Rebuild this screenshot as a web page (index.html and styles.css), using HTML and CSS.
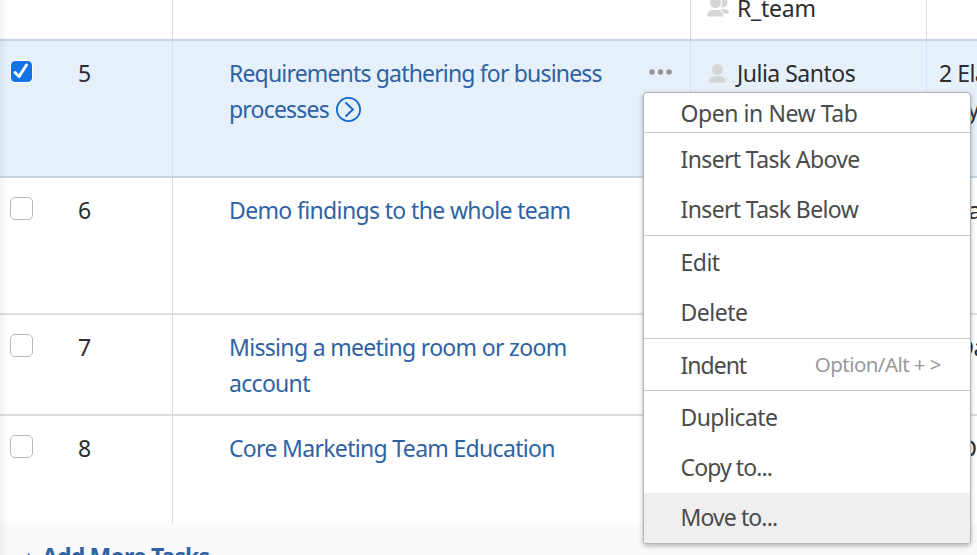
FILE: index.html
```
<!DOCTYPE html>
<html lang="en">
<head>
<meta charset="utf-8">
<title>Tasks</title>
<link rel="stylesheet" href="styles.css">
</head>
<body>
<main class="tasks">
  <div class="row row-partial">
    <div class="cell cell-num"></div>
    <div class="cell cell-name"></div>
    <div class="cell cell-owner">
      <svg class="person team" width="24" height="20" viewBox="0 0 24 20"><circle cx="16.5" cy="5.5" r="5"/><path d="M12 16.500C13 12.500 16 12 18 12Q23.300 12.500 23 16.500Z"/><circle class="halo" cx="9.500" cy="5.500" r="6.800"/><path class="halo" d="M9 11Q17 11 18.500 20H1Z"/><circle cx="9.500" cy="5.500" r="5.500"/><path d="M1 19.500Q1 13.500 7 13H11.500Q17 13.500 17 19.500Z"/></svg>
      <span class="w-team">R_team</span>
    </div>
    <div class="cell cell-effort"></div>
  </div>
  <div class="row row-five selected">
    <div class="cell cell-num">
      <span class="check checked"><svg width="21" height="21" viewBox="0 0 21 21"><path d="M4 11.500L8 15.500L15.500 4"/></svg></span>
      <span class="num">5</span>
    </div>
    <div class="cell cell-name">
      <a class="link"><span class="w-req">Requirements gathering for business</span><br><span class="w-proc">processes</span></a>
      <svg class="go" width="26" height="26" viewBox="0 0 26 26"><circle cx="12.500" cy="12.500" r="11.600"/><path d="M9.500 5.500L17 12.500L9.500 19.500"/></svg>
      <svg class="dots" width="24" height="6" viewBox="0 0 24 6"><circle cx="3" cy="3" r="2.700"/><circle cx="11.500" cy="3" r="2.700"/><circle cx="20" cy="3" r="2.700"/></svg>
    </div>
    <div class="cell cell-owner">
      <svg class="person" width="24" height="20" viewBox="0 0 24 20"><circle cx="11.500" cy="6.500" r="5.500"/><path d="M3 19.500Q3 13.500 9 13.200H14Q20 13.500 20 19.500Z"/></svg>
      <span class="w-julia">Julia Santos</span>
    </div>
    <div class="cell cell-effort"><span>2 Elapsed</span><br><span>Days</span></div>
  </div>
  <div class="row row-six">
    <div class="cell cell-num"><span class="check"></span><span class="num">6</span></div>
    <div class="cell cell-name"><a class="link w-demo">Demo findings to the whole team</a></div>
    <div class="cell cell-owner"></div>
    <div class="cell cell-effort effort-six"><span>4 Days</span></div>
  </div>
  <div class="row row-seven">
    <div class="cell cell-num"><span class="check"></span><span class="num">7</span></div>
    <div class="cell cell-name"><a class="link"><span class="w-miss">Missing a meeting room or zoom</span><br><span class="w-acc">account</span></a></div>
    <div class="cell cell-owner"></div>
    <div class="cell cell-effort"><span>5 Days</span></div>
  </div>
  <div class="row row-eight">
    <div class="cell cell-num"><span class="check"></span><span class="num">8</span></div>
    <div class="cell cell-name"><a class="link w-core">Core Marketing Team Education</a></div>
    <div class="cell cell-owner"></div>
    <div class="cell cell-effort effort-eight"><span>5 D</span></div>
  </div>
  <footer class="add"><span class="plus">+</span><span class="w-add">Add More Tasks</span></footer>
  <div class="edge"></div>
</main>
<nav class="menu">
  <div class="group"><div class="item item-first"><span class="w-open">Open in New Tab</span></div></div>
  <div class="group">
    <div class="item"><span class="w-insert">Insert Task Above</span></div>
    <div class="item"><span class="w-insert">Insert Task Below</span></div>
  </div>
  <div class="group">
    <div class="item"><span>Edit</span></div>
    <div class="item"><span>Delete</span></div>
  </div>
  <div class="group group-indent">
    <div class="item"><span class="w-indent">Indent</span><span class="hint">Option/Alt + &gt;</span></div>
  </div>
  <div class="group group-last">
    <div class="item"><span class="w-dup">Duplicate</span></div>
    <div class="item"><span class="w-dots">Copy to...</span></div>
    <div class="item active"><span class="w-dots">Move to...</span></div>
  </div>
</nav>
</body>
</html>
```
FILE: styles.css
```
* { box-sizing: border-box; }
body {
  margin: 0;
  width: 977px;
  height: 555px;
  overflow: hidden;
  position: relative;
  background: #fff;
  color: #2c2c2c;
  font: 23px/36px "Noto Sans", sans-serif;
  letter-spacing: -0.5px;
}
.tasks { height: 555px; overflow: hidden; position: relative; }
.row {
  display: grid;
  grid-template-columns: 173px 518px 236px 51px;
  border-bottom: 2px solid #dedede;
}
.row-partial { height: 41px; border-color: #c7d4e3; }
.row-five { height: 137px; }
.row-six { height: 137px; }
.row-seven { height: 101px; }
.row-eight { height: 107px; border-bottom: 0; }
.cell {
  border-right: 1px solid #dcdcdc;
  padding-top: 14px;
  white-space: nowrap;
  overflow: hidden;
}
.selected { background: #e6f0fb; border-color: #c7d4e3; }
.selected .cell { border-color: #cfe1fb; }
.cell-num { display: flex; align-items: flex-start; padding-left: 10px; }
.check {
  width: 23px;
  height: 23px;
  margin-top: 5px;
  border: 1px solid #b8b8b8;
  border-radius: 5px;
  background: #fff;
}
.checked { border-color: #fff; background: #1473e6; background-clip: padding-box; }
.checked svg { display: block; fill: none; stroke: #fff; stroke-width: 3; stroke-linecap: round; stroke-linejoin: round; }
.num { margin-left: 45px; }
.cell-name { position: relative; padding-left: 56px; }
.link { color: #2e62a3; }
.go { vertical-align: -5px; margin-left: 2px; fill: none; stroke: #0d66d0; stroke-width: 1.8; }
.dots { position: absolute; left: 476px; top: 28px; fill: #959595; }
.cell-owner { display: flex; align-items: flex-start; padding-left: 15px; }
.person { fill: #d5d5d5; margin: 8px 7px 0 0; flex: none; }
.halo { fill: #fff; }
.row-partial .cell { padding-top: 0; }
.row-partial .cell-owner > * { margin-top: -10px; }
.row-partial .cell-owner > .person { margin-top: -3px; }
.cell-effort { padding-left: 12px; border-right: 0; }
.effort-six { padding-left: 7px; }
.effort-eight { padding-left: 15px; }
.w-team { letter-spacing: -0.25px; }
.w-req { letter-spacing: -0.83px; }
.w-proc { letter-spacing: -0.8px; }
.w-demo { letter-spacing: -0.64px; }
.w-miss { letter-spacing: -0.68px; }
.w-acc { letter-spacing: -0.7px; }
.w-core { letter-spacing: -0.68px; }
.w-add { letter-spacing: -0.85px; }
.w-open { letter-spacing: -0.44px; }
.w-insert { letter-spacing: -0.63px; }
.w-indent { letter-spacing: -1px; }
.w-dup { letter-spacing: -0.6px; }
.w-dots { letter-spacing: -0.9px; }
.add {
  height: 32px;
  overflow: hidden;
  display: flex;
  padding: 15px 0 0 23px;
  background: #fafafa;
  color: #2e62a3;
  font-weight: 700;
}
.plus { font-weight: 400; font-size: 20px; width: 19px; padding-top: 2px; }
.edge {
  position: absolute;
  left: 0;
  top: 0;
  width: 8px;
  height: 555px;
  background: linear-gradient(to right, rgba(70, 90, 120, .08), rgba(70, 90, 120, 0));
}
.menu {
  position: absolute;
  left: 643px;
  top: 92px;
  width: 328px;
  height: 452px;
  border: 1px solid #b3b3b3;
  border-radius: 4px;
  background: #fff;
  box-shadow: 0 2px 5px rgba(0, 0, 0, .28);
  overflow: hidden;
  color: #4b4b4b;
}
.group { padding: 1px 0; border-bottom: 1px solid #c9c9c9; }
.item { height: 50px; padding: 0 29px 0 36.5px; display: flex; align-items: center; justify-content: space-between; white-space: nowrap; }
.item-first { height: 37px; }
.group-indent { padding: 1px 0 0; }
.group-last { padding: 2px 0 0; border-bottom: 0; }
.group-last .item { padding-bottom: 2px; }
.active { background: #efefef; }
.hint { color: #999; font-size: 20.5px; letter-spacing: -0.55px; padding-bottom: 2px; }
```
